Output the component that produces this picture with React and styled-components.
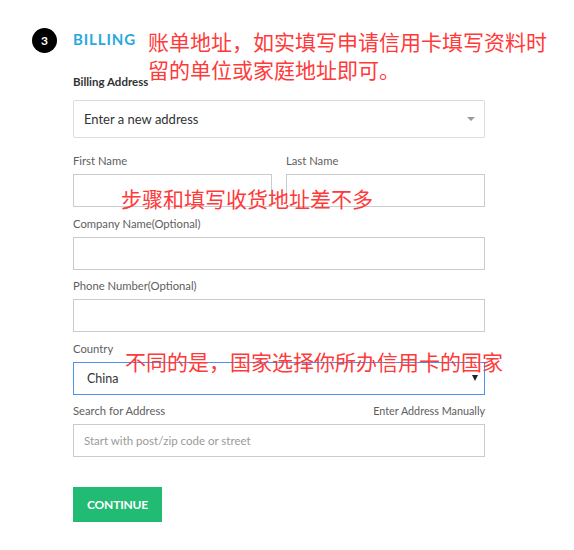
import React from "react";
import styled, { createGlobalStyle } from "styled-components";

const GlobalStyle = createGlobalStyle`
  html, body { margin: 0; padding: 0; background: #ffffff; }
  body { font-family: Lato, "Noto Sans", sans-serif; color: #333; }
  * { box-sizing: border-box; }
`;

const Page = styled.div`
  padding: 28px 0 0 32px;
  width: 574px;
  min-height: 550px;
`;

const Section = styled.section`
  display: grid;
  grid-template-columns: 25px 412px;
  column-gap: 16px;
  align-items: start;
`;

const StepBadge = styled.div`
  width: 25px;
  height: 25px;
  border-radius: 50%;
  background: #000;
  color: #fff;
  font-family: Lato, sans-serif;
  font-weight: 700;
  font-size: 12px;
  display: flex;
  align-items: center;
  justify-content: center;
`;

const Content = styled.div`
  display: flex;
  flex-direction: column;
`;

const Heading = styled.div`
  position: relative;
  height: 22px;
  margin-bottom: 23px;
`;

const Title = styled.h2`
  margin: 0;
  font-family: Lato, sans-serif;
  font-weight: 700;
  font-size: 15px;
  line-height: 22px;
  letter-spacing: 0.9px;
  color: #29a8e0;
`;

const Note = styled.div`
  position: absolute;
  left: ${(p) => p.$left}px;
  top: ${(p) => p.$top}px;
  width: ${(p) => p.$width || 420}px;
  font-family: "Noto Sans CJK SC", sans-serif;
  font-size: 21px;
  line-height: 28px;
  color: #ff3a3a;
  white-space: ${(p) => (p.$nowrap ? "nowrap" : "normal")};
  pointer-events: none;
`;

const Field = styled.div`
  position: relative;
  display: flex;
  flex-direction: column;
  margin-bottom: ${(p) => p.$gap ?? 7.5}px;
`;

const LabelRow = styled.div`
  display: flex;
  justify-content: space-between;
  margin-bottom: ${(p) => p.$gap ?? 5}px;
`;

const Label = styled.label`
  font-family: Lato, sans-serif;
  font-size: ${(p) => (p.$strong ? 11.5 : 11.25)}px;
  font-weight: ${(p) => (p.$strong ? 700 : 400)};
  line-height: 17px;
  color: ${(p) => (p.$strong ? "#333" : "#5e5e5e")};
`;

const LinkText = styled.span`
  font-family: Lato, sans-serif;
  font-size: 10.8px;
  line-height: 17px;
  color: #5e5e5e;
`;

const SelectBox = styled.div`
  height: ${(p) => p.$height || 33}px;
  border: 1px solid ${(p) => (p.$focused ? "#4a92ec" : "#dcdcdc")};
  border-radius: ${(p) => (p.$focused ? 0 : 2)}px;
  display: flex;
  align-items: center;
  justify-content: space-between;
  padding: 0 ${(p) => p.$padRight}px 0 ${(p) => p.$padLeft}px;
  background: #fff;
`;

const SelectValue = styled.span`
  font-family: Lato, sans-serif;
  font-size: ${(p) => p.$size || 13}px;
  color: #333;
`;

const Caret = styled.span`
  width: 0;
  height: 0;
  border-left: ${(p) => p.$half}px solid transparent;
  border-right: ${(p) => p.$half}px solid transparent;
  border-top: ${(p) => p.$depth}px solid ${(p) => p.$color};
`;

const TextBox = styled.div`
  height: 33px;
  border: 1px solid #cbcbcb;
  background: #fff;
  display: flex;
  align-items: center;
  padding: 0 10px;
`;

const Placeholder = styled.span`
  font-family: Lato, sans-serif;
  font-size: 11.5px;
  color: #9a9a9a;
`;

const TwoCols = styled.div`
  position: relative;
  display: grid;
  grid-template-columns: 199px 199px;
  column-gap: 14px;
  margin-bottom: 7.5px;
`;

const NameField = styled.div`
  display: flex;
  flex-direction: column;
`;

const ContinueButton = styled.button`
  align-self: flex-start;
  margin-top: 30px;
  width: 89px;
  height: 35px;
  border: none;
  background: #21bb73;
  color: #fff;
  font-family: Lato, sans-serif;
  font-weight: 700;
  font-size: 12px;
  letter-spacing: -0.2px;
  padding: 0;
  cursor: pointer;
`;

export default function App() {
  return (
    <Page>
      <GlobalStyle />
      <Section>
        <StepBadge>3</StepBadge>
        <Content>
          <Heading>
            <Title>BILLING</Title>
            <Note $left={75} $top={-1.5} $width={405}>
              账单地址，如实填写申请信用卡填写资料时留的单位或家庭地址即可。
            </Note>
          </Heading>

          <Field $gap={14}>
            <LabelRow $gap={10}>
              <Label $strong>Billing Address</Label>
            </LabelRow>
            <SelectBox $height={38} $padLeft={10} $padRight={9}>
              <SelectValue>Enter a new address</SelectValue>
              <Caret $half={4} $depth={4} $color="#9a9a9a" />
            </SelectBox>
          </Field>

          <TwoCols>
            <NameField>
              <LabelRow>
                <Label>First Name</Label>
              </LabelRow>
              <TextBox />
            </NameField>
            <NameField>
              <LabelRow>
                <Label>Last Name</Label>
              </LabelRow>
              <TextBox />
            </NameField>
            <Note $left={48} $top={31.5} $nowrap>
              步骤和填写收货地址差不多
            </Note>
          </TwoCols>

          <Field>
            <LabelRow>
              <Label>Company Name(Optional)</Label>
            </LabelRow>
            <TextBox />
          </Field>

          <Field>
            <LabelRow>
              <Label>Phone Number(Optional)</Label>
            </LabelRow>
            <TextBox />
          </Field>

          <Field>
            <LabelRow>
              <Label>Country</Label>
            </LabelRow>
            <SelectBox $focused $padLeft={13} $padRight={6}>
              <SelectValue $size={12.5}>China</SelectValue>
              <Caret $half={3} $depth={6} $color="#222" />
            </SelectBox>
            <Note $left={52} $top={7.5} $nowrap>
              不同的是，国家选择你所办信用卡的国家
            </Note>
          </Field>

          <Field $gap={0}>
            <LabelRow>
              <Label>Search for Address</Label>
              <LinkText>Enter Address Manually</LinkText>
            </LabelRow>
            <TextBox>
              <Placeholder>Start with post/zip code or street</Placeholder>
            </TextBox>
          </Field>

          <ContinueButton>CONTINUE</ContinueButton>
        </Content>
      </Section>
    </Page>
  );
}
